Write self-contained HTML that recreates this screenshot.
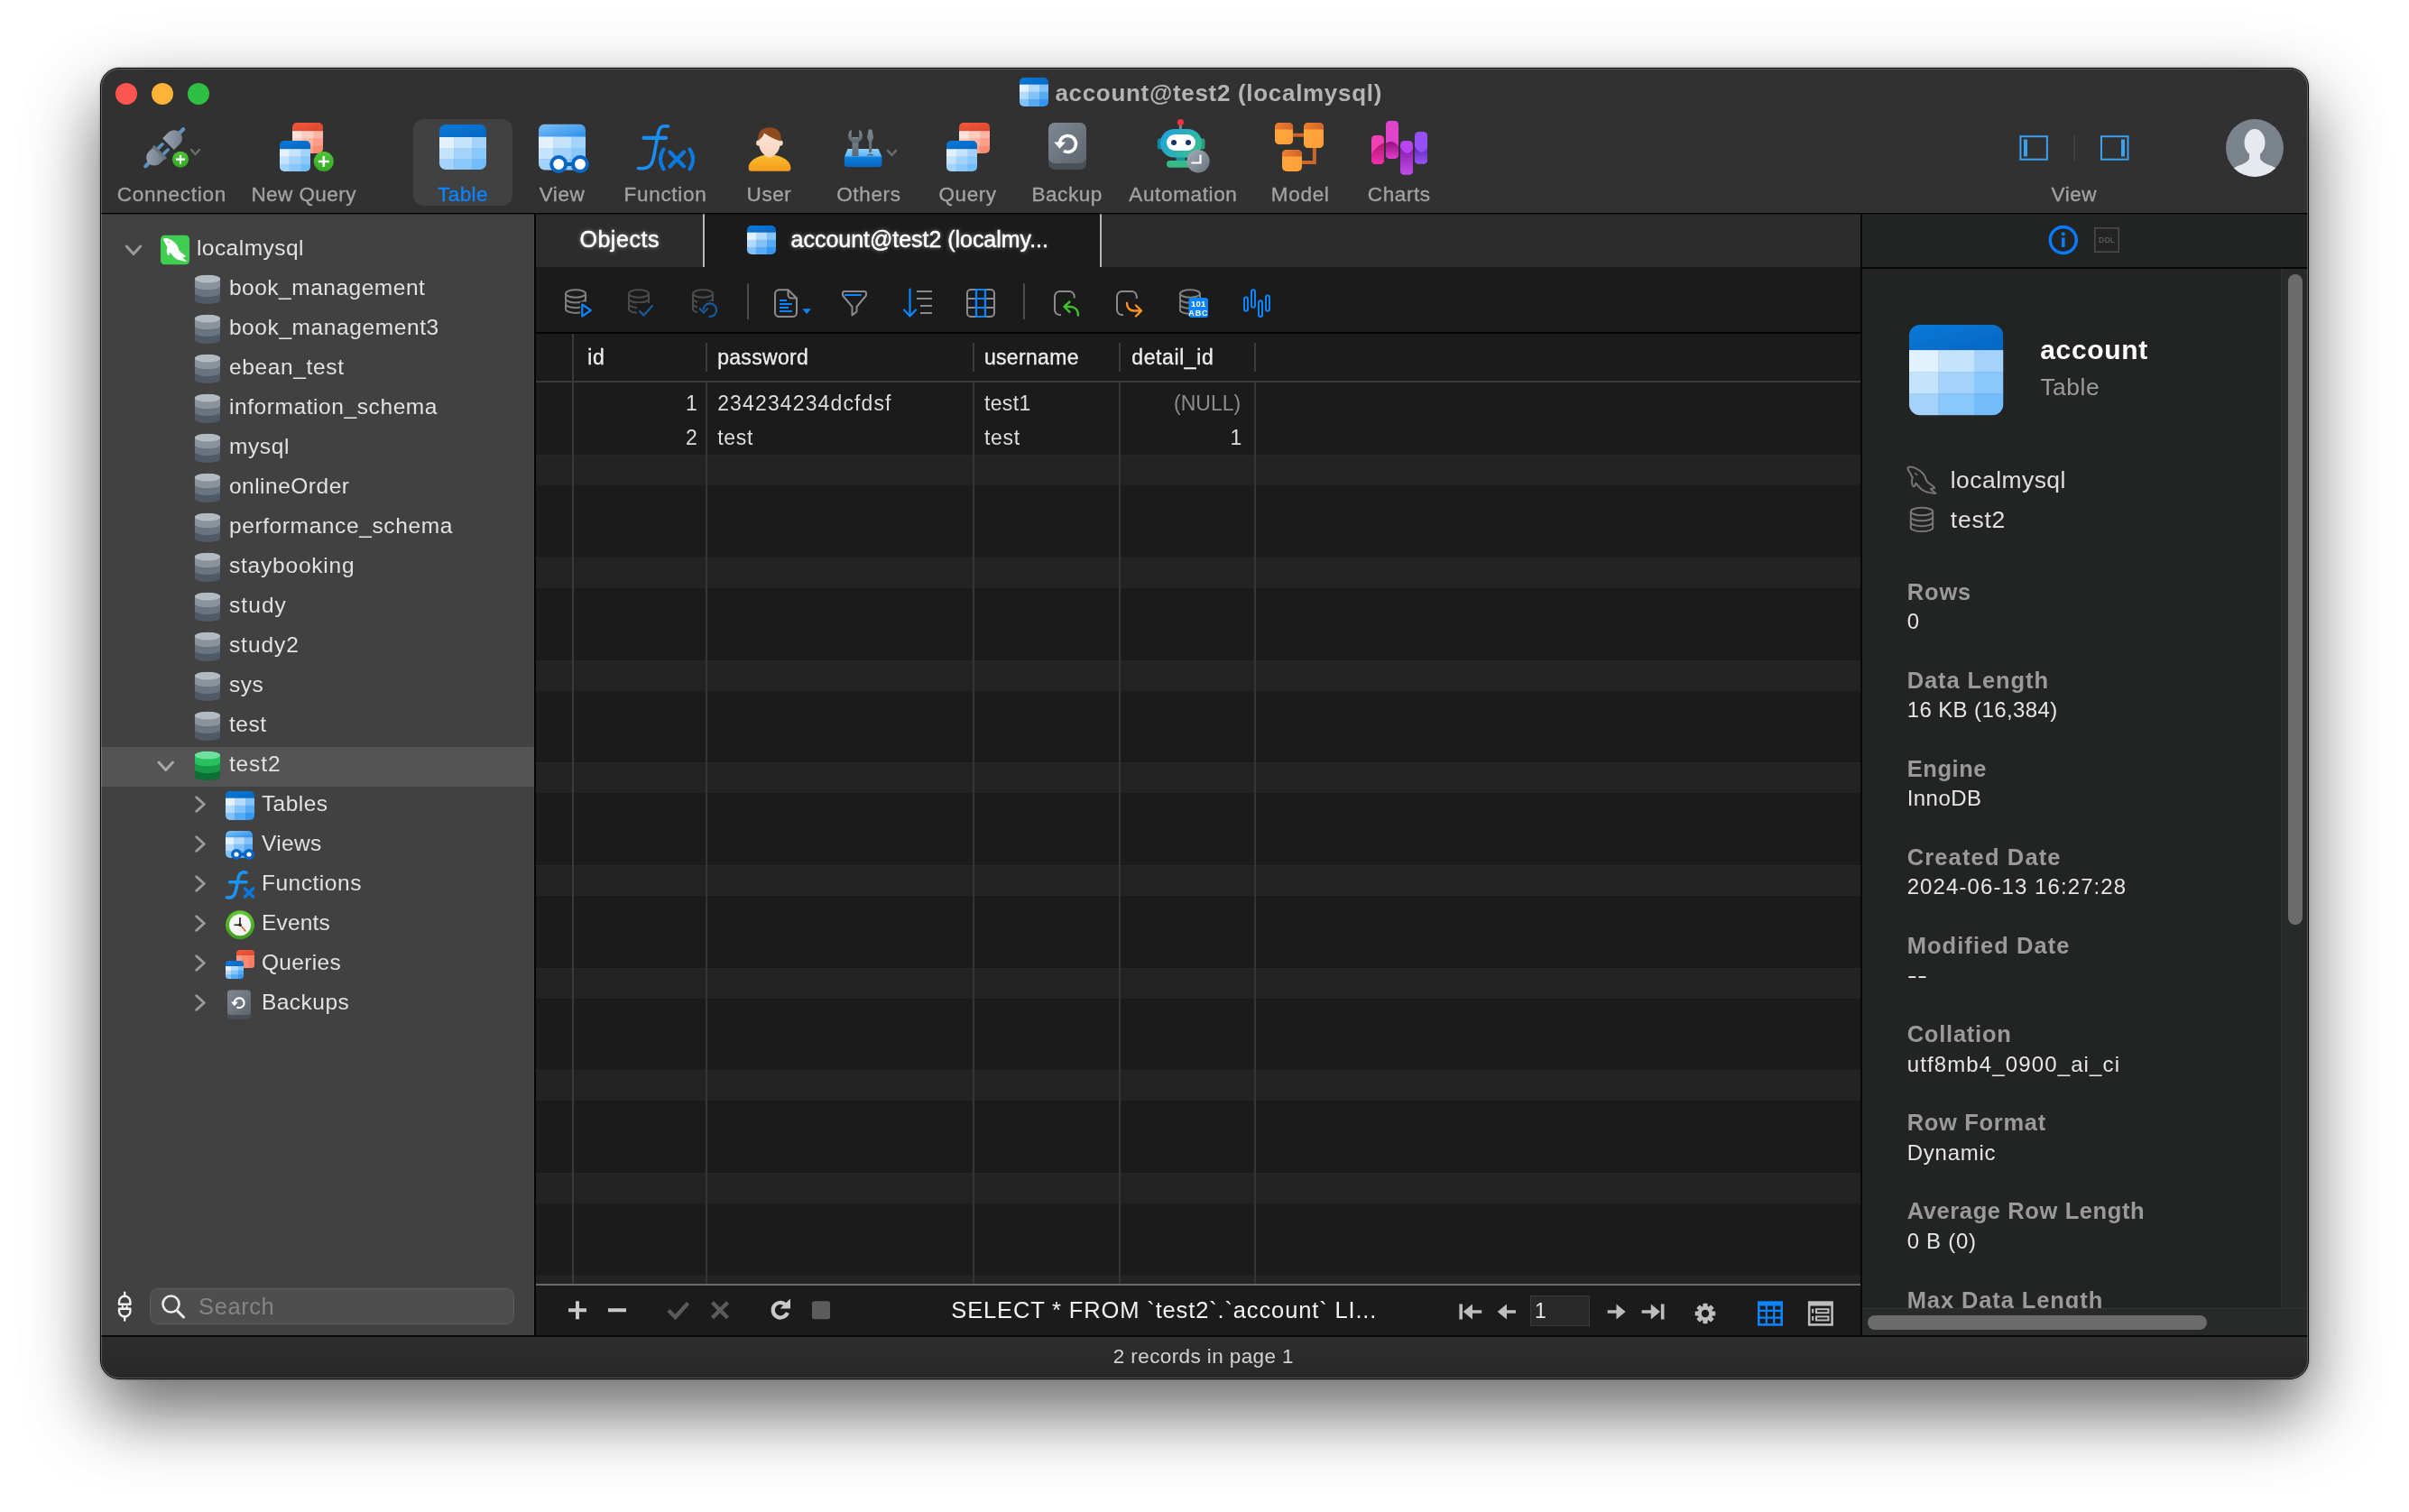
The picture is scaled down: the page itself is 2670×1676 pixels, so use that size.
<!DOCTYPE html>
<html lang="en"><head><meta charset="utf-8"><title>account@test2 (localmysql)</title>
<style>
html,body{margin:0;padding:0;}
body{width:2670px;height:1676px;background:#fff;position:relative;overflow:hidden;font-family:"Liberation Sans", sans-serif;}
#shadow{position:absolute;left:111px;top:75px;width:2448px;height:1454px;border-radius:21px;
  box-shadow:0 37px 74px rgba(0,0,0,.53), 0 30px 110px rgba(0,0,0,.10), 0 0 3px rgba(0,0,0,.3);}
#win{position:absolute;left:111px;top:75px;width:2446px;height:1452px;border:1px solid #000;border-radius:21px;overflow:hidden;background:#323232;}
#pg{position:absolute;left:-112px;top:-76px;width:2670px;height:1676px;will-change:transform;}
#pg div,#pg span{position:absolute;box-sizing:border-box;}
.t{white-space:nowrap;}
#hl{position:absolute;left:0;top:0;right:0;bottom:0;border-radius:20px;box-shadow:inset 0 0 0 1px rgba(255,255,255,.24);pointer-events:none;}
svg{position:absolute;left:0;top:0;}
</style></head><body>
<div id="shadow"></div>
<div id="win"><div id="pg">
<div style="left:112px;top:76px;width:2446px;height:160px;background:#313131;"></div>
<div style="left:112px;top:236px;width:2446px;height:1px;background:#020202;"></div>
<div style="left:112px;top:237px;width:480px;height:1243px;background:#414141;"></div>
<div style="left:591px;top:238px;width:1px;height:1242px;background:#484848;"></div>
<div style="left:592px;top:237px;width:2px;height:1243px;background:#050505;"></div>
<div style="left:594px;top:237px;width:1468px;height:1243px;background:#1b1b1b;"></div>
<div style="left:594px;top:237px;width:1468px;height:59px;background:#2c2c2c;"></div>
<div style="left:781px;top:237px;width:438px;height:59px;background:#1b1b1b;"></div>
<div style="left:779px;top:237px;width:2px;height:59px;background:#b9b9b9;"></div>
<div style="left:1219px;top:237px;width:2px;height:59px;background:#b9b9b9;"></div>
<div style="left:594px;top:368px;width:1468px;height:2px;background:#050505;"></div>
<div style="left:2062px;top:237px;width:2px;height:1243px;background:#080808;"></div>
<div style="left:2064px;top:237px;width:494px;height:1243px;background:#222423;"></div>
<div style="left:2064px;top:296px;width:494px;height:2px;background:#060606;"></div>
<div style="left:112px;top:1480px;width:2446px;height:2px;background:#0a0a0a;"></div>
<div style="left:112px;top:1482px;width:2446px;height:46px;background:linear-gradient(#2e2e2e,#272727);"></div>
<div style="left:112px;top:237px;width:2446px;height:1px;background:rgba(0,0,0,.32);"></div>
<div style="left:112px;top:828px;width:480px;height:44px;background:#545454;"></div>
<div style="left:594px;top:504px;width:1468px;height:34px;background:#232323;border-top:1px solid #272727;"></div>
<div style="left:594px;top:618px;width:1468px;height:34px;background:#232323;border-top:1px solid #272727;"></div>
<div style="left:594px;top:732px;width:1468px;height:34px;background:#232323;border-top:1px solid #272727;"></div>
<div style="left:594px;top:845px;width:1468px;height:34px;background:#232323;border-top:1px solid #272727;"></div>
<div style="left:594px;top:959px;width:1468px;height:34px;background:#232323;border-top:1px solid #272727;"></div>
<div style="left:594px;top:1073px;width:1468px;height:34px;background:#232323;border-top:1px solid #272727;"></div>
<div style="left:594px;top:1186px;width:1468px;height:34px;background:#232323;border-top:1px solid #272727;"></div>
<div style="left:594px;top:1300px;width:1468px;height:34px;background:#232323;border-top:1px solid #272727;"></div>
<div style="left:594px;top:1414px;width:1468px;height:9px;background:#232323;border-top:1px solid #272727;"></div>
<div style="left:594px;top:422px;width:1468px;height:2px;background:#3a3a3a;"></div>
<div style="left:634px;top:370px;width:2px;height:1053px;background:#3a3a3a;"></div>
<div style="left:782px;top:380px;width:2px;height:32px;background:#3c3c3c;"></div>
<div style="left:782px;top:424px;width:2px;height:999px;background:#353535;"></div>
<div style="left:1078px;top:380px;width:2px;height:32px;background:#3c3c3c;"></div>
<div style="left:1078px;top:424px;width:2px;height:999px;background:#353535;"></div>
<div style="left:1240px;top:380px;width:2px;height:32px;background:#3c3c3c;"></div>
<div style="left:1240px;top:424px;width:2px;height:999px;background:#353535;"></div>
<div style="left:1390px;top:380px;width:2px;height:32px;background:#3c3c3c;"></div>
<div style="left:1390px;top:424px;width:2px;height:999px;background:#353535;"></div>
<div style="left:594px;top:1423px;width:1468px;height:2px;background:#6a6a6a;"></div>
<div style="left:458px;top:132px;width:110px;height:96px;background:#414141;border-radius:12px;"></div>
<div style="left:128px;top:92px;width:24px;height:24px;background:#fe5551;border-radius:50%;"></div>
<div style="left:168px;top:92px;width:24px;height:24px;background:#fdb338;border-radius:50%;"></div>
<div style="left:208px;top:92px;width:24px;height:24px;background:#2fc043;border-radius:50%;"></div>
<div style="left:166px;top:1428px;width:404px;height:40px;background:#4e4e4e;border:1px solid #5c5c5c;border-radius:9px;"></div>
<div style="left:1696px;top:1436px;width:66px;height:34px;background:#292929;border:1px solid #3b3b3b;"></div>
<div style="left:2528px;top:298px;width:1px;height:1152px;background:#2e2f2f;"></div>
<div style="left:2529px;top:298px;width:29px;height:1152px;background:#282929;"></div>
<div style="left:2536px;top:304px;width:16px;height:721px;background:#6b6b6b;border-radius:8px;"></div>
<span id="t1" class="t" style="left:1169.4px;top:89.7px;font-size:26px;line-height:26px;color:#b4b4b4;font-weight:700;letter-spacing:0.690px;">account@test2 (localmysql)</span>
<span id="t2" class="t" style="left:129.7px;top:205.0px;font-size:22.5px;line-height:22.5px;color:#a2a2a2;font-weight:400;letter-spacing:0.737px;-webkit-text-stroke:0.35px currentColor;">Connection</span>
<span id="t3" class="t" style="left:278.4px;top:205.0px;font-size:22.5px;line-height:22.5px;color:#a2a2a2;font-weight:400;letter-spacing:0.441px;-webkit-text-stroke:0.35px currentColor;">New Query</span>
<span id="t4" class="t" style="left:485.0px;top:205.0px;font-size:22.5px;line-height:22.5px;color:#0a84ff;font-weight:400;letter-spacing:0.442px;-webkit-text-stroke:0.35px currentColor;">Table</span>
<span id="t5" class="t" style="left:597.7px;top:205.0px;font-size:22.5px;line-height:22.5px;color:#a2a2a2;font-weight:400;letter-spacing:0.549px;-webkit-text-stroke:0.35px currentColor;">View</span>
<span id="t6" class="t" style="left:691.6px;top:205.0px;font-size:22.5px;line-height:22.5px;color:#a2a2a2;font-weight:400;letter-spacing:0.689px;-webkit-text-stroke:0.35px currentColor;">Function</span>
<span id="t7" class="t" style="left:827.6px;top:205.0px;font-size:22.5px;line-height:22.5px;color:#a2a2a2;font-weight:400;letter-spacing:0.549px;-webkit-text-stroke:0.35px currentColor;">User</span>
<span id="t8" class="t" style="left:927.2px;top:205.0px;font-size:22.5px;line-height:22.5px;color:#a2a2a2;font-weight:400;letter-spacing:0.646px;-webkit-text-stroke:0.35px currentColor;">Others</span>
<span id="t9" class="t" style="left:1040.6px;top:205.0px;font-size:22.5px;line-height:22.5px;color:#a2a2a2;font-weight:400;letter-spacing:0.525px;-webkit-text-stroke:0.35px currentColor;">Query</span>
<span id="t10" class="t" style="left:1143.4px;top:205.0px;font-size:22.5px;line-height:22.5px;color:#a2a2a2;font-weight:400;letter-spacing:0.577px;-webkit-text-stroke:0.35px currentColor;">Backup</span>
<span id="t11" class="t" style="left:1251.3px;top:205.0px;font-size:22.5px;line-height:22.5px;color:#a2a2a2;font-weight:400;letter-spacing:0.638px;-webkit-text-stroke:0.35px currentColor;">Automation</span>
<span id="t12" class="t" style="left:1408.7px;top:205.0px;font-size:22.5px;line-height:22.5px;color:#a2a2a2;font-weight:400;letter-spacing:0.725px;-webkit-text-stroke:0.35px currentColor;">Model</span>
<span id="t13" class="t" style="left:1515.8px;top:205.0px;font-size:22.5px;line-height:22.5px;color:#a2a2a2;font-weight:400;letter-spacing:0.605px;-webkit-text-stroke:0.35px currentColor;">Charts</span>
<span id="t14" class="t" style="left:2273.6px;top:205.0px;font-size:22.5px;line-height:22.5px;color:#a2a2a2;font-weight:400;letter-spacing:0.549px;-webkit-text-stroke:0.35px currentColor;">View</span>
<span id="t15" class="t" style="left:642.4px;top:252.8px;font-size:25px;line-height:25px;color:#ffffff;font-weight:400;letter-spacing:0.551px;text-shadow:0 0 5px rgba(255,255,255,.55),0 0 1px rgba(255,255,255,.5);-webkit-text-stroke:0.35px currentColor;">Objects</span>
<span id="t16" class="t" style="left:876.6px;top:252.8px;font-size:25px;line-height:25px;color:#ffffff;font-weight:400;letter-spacing:-0.033px;text-shadow:0 0 5px rgba(255,255,255,.55),0 0 1px rgba(255,255,255,.5);-webkit-text-stroke:0.35px currentColor;">account@test2 (localmy...</span>
<span id="t17" class="t" style="left:217.9px;top:263.3px;font-size:24.5px;line-height:24.5px;color:#e2e2e2;font-weight:400;letter-spacing:0.471px;">localmysql</span>
<span id="t18" class="t" style="left:253.9px;top:307.0px;font-size:24.5px;line-height:24.5px;color:#e2e2e2;font-weight:400;letter-spacing:0.515px;">book_management</span>
<span id="t19" class="t" style="left:253.9px;top:351.0px;font-size:24.5px;line-height:24.5px;color:#e2e2e2;font-weight:400;letter-spacing:0.593px;">book_management3</span>
<span id="t20" class="t" style="left:253.9px;top:395.0px;font-size:24.5px;line-height:24.5px;color:#e2e2e2;font-weight:400;letter-spacing:0.653px;">ebean_test</span>
<span id="t21" class="t" style="left:253.9px;top:439.0px;font-size:24.5px;line-height:24.5px;color:#e2e2e2;font-weight:400;letter-spacing:0.587px;">information_schema</span>
<span id="t22" class="t" style="left:253.9px;top:483.0px;font-size:24.5px;line-height:24.5px;color:#e2e2e2;font-weight:400;letter-spacing:0.620px;">mysql</span>
<span id="t23" class="t" style="left:253.9px;top:527.0px;font-size:24.5px;line-height:24.5px;color:#e2e2e2;font-weight:400;letter-spacing:0.505px;">onlineOrder</span>
<span id="t24" class="t" style="left:253.9px;top:571.0px;font-size:24.5px;line-height:24.5px;color:#e2e2e2;font-weight:400;letter-spacing:0.618px;">performance_schema</span>
<span id="t25" class="t" style="left:253.9px;top:615.0px;font-size:24.5px;line-height:24.5px;color:#e2e2e2;font-weight:400;letter-spacing:0.802px;">staybooking</span>
<span id="t26" class="t" style="left:253.9px;top:659.0px;font-size:24.5px;line-height:24.5px;color:#e2e2e2;font-weight:400;letter-spacing:1.104px;">study</span>
<span id="t27" class="t" style="left:253.9px;top:703.0px;font-size:24.5px;line-height:24.5px;color:#e2e2e2;font-weight:400;letter-spacing:0.981px;">study2</span>
<span id="t28" class="t" style="left:253.9px;top:747.0px;font-size:24.5px;line-height:24.5px;color:#e2e2e2;font-weight:400;letter-spacing:0.569px;">sys</span>
<span id="t29" class="t" style="left:253.9px;top:791.0px;font-size:24.5px;line-height:24.5px;color:#e2e2e2;font-weight:400;letter-spacing:0.569px;">test</span>
<span id="t30" class="t" style="left:253.9px;top:835.0px;font-size:24.5px;line-height:24.5px;color:#e2e2e2;font-weight:400;letter-spacing:0.892px;">test2</span>
<span id="t31" class="t" style="left:289.9px;top:879.0px;font-size:24.5px;line-height:24.5px;color:#e2e2e2;font-weight:400;letter-spacing:0.460px;">Tables</span>
<span id="t32" class="t" style="left:289.9px;top:923.0px;font-size:24.5px;line-height:24.5px;color:#e2e2e2;font-weight:400;letter-spacing:0.392px;">Views</span>
<span id="t33" class="t" style="left:289.9px;top:967.0px;font-size:24.5px;line-height:24.5px;color:#e2e2e2;font-weight:400;letter-spacing:0.539px;">Functions</span>
<span id="t34" class="t" style="left:289.9px;top:1011.0px;font-size:24.5px;line-height:24.5px;color:#e2e2e2;font-weight:400;letter-spacing:0.211px;">Events</span>
<span id="t35" class="t" style="left:289.9px;top:1055.0px;font-size:24.5px;line-height:24.5px;color:#e2e2e2;font-weight:400;letter-spacing:0.326px;">Queries</span>
<span id="t36" class="t" style="left:289.9px;top:1099.0px;font-size:24.5px;line-height:24.5px;color:#e2e2e2;font-weight:400;letter-spacing:0.486px;">Backups</span>
<span id="t37" class="t" style="left:220.1px;top:1436.1px;font-size:25.5px;line-height:25.5px;color:#858585;font-weight:400;letter-spacing:0.559px;">Search</span>
<span id="t38" class="t" style="left:651.3px;top:385.0px;font-size:23px;line-height:23px;color:#ececec;font-weight:400;letter-spacing:0.686px;-webkit-text-stroke:0.35px currentColor;">id</span>
<span id="t39" class="t" style="left:795.2px;top:385.0px;font-size:23px;line-height:23px;color:#ececec;font-weight:400;letter-spacing:0.302px;-webkit-text-stroke:0.35px currentColor;">password</span>
<span id="t40" class="t" style="left:1090.9px;top:385.0px;font-size:23px;line-height:23px;color:#ececec;font-weight:400;letter-spacing:0.334px;-webkit-text-stroke:0.35px currentColor;">username</span>
<span id="t41" class="t" style="left:1254.3px;top:385.0px;font-size:23px;line-height:23px;color:#ececec;font-weight:400;letter-spacing:0.596px;-webkit-text-stroke:0.35px currentColor;">detail_id</span>
<span id="t42" class="t" style="right:1897.1px;top:436.0px;font-size:23px;line-height:23px;color:#dedede;font-weight:400;">1</span>
<span id="t43" class="t" style="right:1897.1px;top:473.9px;font-size:23px;line-height:23px;color:#dedede;font-weight:400;">2</span>
<span id="t44" class="t" style="left:795.2px;top:436.0px;font-size:23px;line-height:23px;color:#dedede;font-weight:400;letter-spacing:1.131px;">234234234dcfdsf</span>
<span id="t45" class="t" style="left:795.2px;top:473.9px;font-size:23px;line-height:23px;color:#dedede;font-weight:400;letter-spacing:0.686px;">test</span>
<span id="t46" class="t" style="left:1090.9px;top:436.0px;font-size:23px;line-height:23px;color:#dedede;font-weight:400;letter-spacing:0.378px;">test1</span>
<span id="t47" class="t" style="left:1090.9px;top:473.9px;font-size:23px;line-height:23px;color:#dedede;font-weight:400;letter-spacing:0.686px;">test</span>
<span id="t48" class="t" style="left:1301.0px;top:436.0px;font-size:23px;line-height:23px;color:#8c8c8c;font-weight:400;letter-spacing:0.004px;">(NULL)</span>
<span id="t49" class="t" style="right:1293.6px;top:473.9px;font-size:23px;line-height:23px;color:#dedede;font-weight:400;">1</span>
<span id="t50" class="t" style="left:1054.3px;top:1439.9px;font-size:25.5px;line-height:25.5px;color:#f2f2f2;font-weight:400;letter-spacing:0.857px;">SELECT * FROM `test2`.`account` LI...</span>
<span id="t51" class="t" style="left:1701.0px;top:1442.0px;font-size:23px;line-height:23px;color:#e6e6e6;font-weight:400;">1</span>
<span id="t52" class="t" style="left:1233.8px;top:1493.0px;font-size:22.5px;line-height:22.5px;color:#d2d2d2;font-weight:400;letter-spacing:0.394px;">2 records in page 1</span>
<span id="t53" class="t" style="left:2261.2px;top:372.6px;font-size:30px;line-height:30px;color:#ffffff;font-weight:700;letter-spacing:0.660px;">account</span>
<span id="t54" class="t" style="left:2261.4px;top:415.6px;font-size:26.5px;line-height:26.5px;color:#9b9b9b;font-weight:400;letter-spacing:0.478px;">Table</span>
<span id="t55" class="t" style="left:2161.8px;top:518.9px;font-size:26.5px;line-height:26.5px;color:#e0e0e0;font-weight:400;letter-spacing:0.435px;">localmysql</span>
<span id="t56" class="t" style="left:2161.8px;top:563.2px;font-size:26.5px;line-height:26.5px;color:#e0e0e0;font-weight:400;letter-spacing:0.759px;">test2</span>
<span id="t57" class="t" style="left:2113.7px;top:644.0px;font-size:25.5px;line-height:25.5px;color:#9a9a9a;font-weight:700;letter-spacing:0.853px;">Rows</span>
<span id="t58" class="t" style="left:2113.7px;top:677.2px;font-size:24px;line-height:24px;color:#e6e6e6;font-weight:400;letter-spacing:0.870px;">0</span>
<span id="t59" class="t" style="left:2113.7px;top:742.1px;font-size:25.5px;line-height:25.5px;color:#9a9a9a;font-weight:700;letter-spacing:0.893px;">Data Length</span>
<span id="t60" class="t" style="left:2113.7px;top:775.2px;font-size:24px;line-height:24px;color:#e6e6e6;font-weight:400;letter-spacing:0.386px;">16 KB (16,384)</span>
<span id="t61" class="t" style="left:2113.7px;top:840.1px;font-size:25.5px;line-height:25.5px;color:#9a9a9a;font-weight:700;letter-spacing:0.558px;">Engine</span>
<span id="t62" class="t" style="left:2113.7px;top:873.3px;font-size:24px;line-height:24px;color:#e6e6e6;font-weight:400;letter-spacing:0.446px;">InnoDB</span>
<span id="t63" class="t" style="left:2113.7px;top:938.2px;font-size:25.5px;line-height:25.5px;color:#9a9a9a;font-weight:700;letter-spacing:1.138px;">Created Date</span>
<span id="t64" class="t" style="left:2113.7px;top:971.4px;font-size:24px;line-height:24px;color:#e6e6e6;font-weight:400;letter-spacing:1.088px;">2024-06-13 16:27:28</span>
<span id="t65" class="t" style="left:2113.7px;top:1036.3px;font-size:25.5px;line-height:25.5px;color:#9a9a9a;font-weight:700;letter-spacing:1.045px;">Modified Date</span>
<span id="t66" class="t" style="left:2113.7px;top:1069.4px;font-size:24px;line-height:24px;color:#e6e6e6;font-weight:400;transform:scaleX(1.32);transform-origin:0 0;letter-spacing:0.6px;">--</span>
<span id="t67" class="t" style="left:2113.7px;top:1134.3px;font-size:25.5px;line-height:25.5px;color:#9a9a9a;font-weight:700;letter-spacing:0.765px;">Collation</span>
<span id="t68" class="t" style="left:2113.7px;top:1167.5px;font-size:24px;line-height:24px;color:#e6e6e6;font-weight:400;letter-spacing:1.126px;">utf8mb4_0900_ai_ci</span>
<span id="t69" class="t" style="left:2113.7px;top:1232.4px;font-size:25.5px;line-height:25.5px;color:#9a9a9a;font-weight:700;letter-spacing:0.683px;">Row Format</span>
<span id="t70" class="t" style="left:2113.7px;top:1265.5px;font-size:24px;line-height:24px;color:#e6e6e6;font-weight:400;letter-spacing:0.754px;">Dynamic</span>
<span id="t71" class="t" style="left:2113.7px;top:1330.4px;font-size:25.5px;line-height:25.5px;color:#9a9a9a;font-weight:700;letter-spacing:0.605px;">Average Row Length</span>
<span id="t72" class="t" style="left:2113.7px;top:1363.6px;font-size:24px;line-height:24px;color:#e6e6e6;font-weight:400;letter-spacing:0.701px;">0 B (0)</span>
<span id="t73" class="t" style="left:2113.7px;top:1428.5px;font-size:25.5px;line-height:25.5px;color:#9a9a9a;font-weight:700;letter-spacing:0.896px;">Max Data Length</span>
<div style="left:2064px;top:1450px;width:494px;height:1px;background:#323333;"></div>
<div style="left:2064px;top:1451px;width:494px;height:29px;background:#282929;"></div>
<div style="left:2070px;top:1458px;width:376px;height:16px;background:#6b6b6b;border-radius:8px;"></div>
<svg width="2670" height="1676" viewBox="0 0 2670 1676" font-family='"Liberation Sans", sans-serif'>
<defs>
<clipPath id="cp1"><rect x="1130" y="86" width="32" height="32" rx="5"/></clipPath>
<linearGradient id="lg2" x1="0" y1="0" x2="1" y2="1"><stop offset="0" stop-color="#0a7ad8"/><stop offset="1" stop-color="#0566c2"/></linearGradient>
<clipPath id="cp3"><rect x="828" y="250" width="32" height="32" rx="5"/></clipPath>
<linearGradient id="lg4" x1="0" y1="0" x2="1" y2="1"><stop offset="0" stop-color="#0a7ad8"/><stop offset="1" stop-color="#0566c2"/></linearGradient>
<linearGradient id="lg5" x1="0" y1="0" x2="1" y2="1"><stop offset="0" stop-color="#9ba6b1"/><stop offset="1" stop-color="#6e7a86"/></linearGradient>
<linearGradient id="lg6" x1="0" y1="0" x2="0" y2="1"><stop offset="0" stop-color="#4cc535"/><stop offset="1" stop-color="#35a924"/></linearGradient>
<clipPath id="cp7"><rect x="324" y="136" width="34" height="34" rx="5"/></clipPath>
<linearGradient id="lg8" x1="0" y1="0" x2="1" y2="1"><stop offset="0" stop-color="#f4583a"/><stop offset="1" stop-color="#d8452c"/></linearGradient>
<clipPath id="cp9"><rect x="310" y="156" width="34" height="34" rx="5"/></clipPath>
<linearGradient id="lg10" x1="0" y1="0" x2="1" y2="1"><stop offset="0" stop-color="#0a7ad8"/><stop offset="1" stop-color="#0566c2"/></linearGradient>
<linearGradient id="lg11" x1="0" y1="0" x2="0" y2="1"><stop offset="0" stop-color="#4cc535"/><stop offset="1" stop-color="#35a924"/></linearGradient>
<clipPath id="cp12"><rect x="487" y="138" width="52" height="50" rx="7"/></clipPath>
<linearGradient id="lg13" x1="0" y1="0" x2="1" y2="1"><stop offset="0" stop-color="#0a7ad8"/><stop offset="1" stop-color="#0566c2"/></linearGradient>
<clipPath id="cp14"><rect x="597" y="137.5" width="52" height="51" rx="7"/></clipPath>
<linearGradient id="lg15" x1="0" y1="0" x2="1" y2="1"><stop offset="0" stop-color="#7fc0f7"/><stop offset="1" stop-color="#2a8eea"/></linearGradient>
<linearGradient id="lg16" x1="0" y1="0" x2="0" y2="1"><stop offset="0" stop-color="#fbbf2d"/><stop offset="1" stop-color="#f59a1f"/></linearGradient>
<linearGradient id="lg17" x1="0" y1="0" x2="0" y2="1"><stop offset="0" stop-color="#fde8da"/><stop offset="1" stop-color="#fbd3bd"/></linearGradient>
<clipPath id="cp18"><ellipse cx="852.7" cy="158" rx="12.6" ry="15"/></clipPath>
<linearGradient id="lg19" x1="0" y1="0" x2="0" y2="1"><stop offset="0" stop-color="#7d8790"/><stop offset="1" stop-color="#5d6770"/></linearGradient>
<linearGradient id="lg20" x1="0" y1="0" x2="0" y2="1"><stop offset="0" stop-color="#8fd0fb"/><stop offset="1" stop-color="#5ab4f6"/></linearGradient>
<linearGradient id="lg21" x1="0" y1="0" x2="0" y2="1"><stop offset="0" stop-color="#0f80de"/><stop offset="1" stop-color="#0568c6"/></linearGradient>
<clipPath id="cp22"><rect x="1063" y="136" width="34" height="34" rx="5"/></clipPath>
<linearGradient id="lg23" x1="0" y1="0" x2="1" y2="1"><stop offset="0" stop-color="#f4583a"/><stop offset="1" stop-color="#d8452c"/></linearGradient>
<clipPath id="cp24"><rect x="1049" y="156" width="34" height="34" rx="5"/></clipPath>
<linearGradient id="lg25" x1="0" y1="0" x2="1" y2="1"><stop offset="0" stop-color="#0a7ad8"/><stop offset="1" stop-color="#0566c2"/></linearGradient>
<linearGradient id="lg26" x1="0" y1="0" x2="1" y2="1"><stop offset="0" stop-color="#808993"/><stop offset="1" stop-color="#5d656e"/></linearGradient>
<linearGradient id="lg27" x1="0" y1="0.2" x2="1" y2="0.8"><stop offset="0" stop-color="#1fa3de"/><stop offset="0.5" stop-color="#2ab0b8"/><stop offset="1" stop-color="#3dc088"/></linearGradient>
<linearGradient id="lg28" x1="0" y1="0" x2="1" y2="1"><stop offset="0" stop-color="#a2adb8"/><stop offset="1" stop-color="#68737f"/></linearGradient>
<clipPath id="cp29"><rect x="1413" y="136" width="20.2" height="24.2" rx="5"/></clipPath>
<linearGradient id="lg30" x1="0" y1="0" x2="1" y2="1"><stop offset="0" stop-color="#ffab3c"/><stop offset="1" stop-color="#ff9c38"/></linearGradient>
<linearGradient id="lg31" x1="0" y1="0" x2="1" y2="0"><stop offset="0" stop-color="#f07f2c"/><stop offset="1" stop-color="#d0652a"/></linearGradient>
<clipPath id="cp32"><rect x="1445" y="136" width="22" height="28.2" rx="5"/></clipPath>
<linearGradient id="lg33" x1="0" y1="0" x2="1" y2="1"><stop offset="0" stop-color="#ffab3c"/><stop offset="1" stop-color="#ff9c38"/></linearGradient>
<linearGradient id="lg34" x1="0" y1="0" x2="1" y2="0"><stop offset="0" stop-color="#f07f2c"/><stop offset="1" stop-color="#d0652a"/></linearGradient>
<clipPath id="cp35"><rect x="1421" y="166" width="22" height="24" rx="5"/></clipPath>
<linearGradient id="lg36" x1="0" y1="0" x2="1" y2="1"><stop offset="0" stop-color="#ffab3c"/><stop offset="1" stop-color="#ff9c38"/></linearGradient>
<linearGradient id="lg37" x1="0" y1="0" x2="1" y2="0"><stop offset="0" stop-color="#f07f2c"/><stop offset="1" stop-color="#d0652a"/></linearGradient>
<clipPath id="cp38"><rect x="1520" y="150" width="14" height="32" rx="4.500"/></clipPath>
<linearGradient id="lg39" x1="0" y1="0" x2="0" y2="1"><stop offset="0" stop-color="#b01672"/><stop offset="1" stop-color="#f030b0"/></linearGradient>
<clipPath id="cp40"><rect x="1536" y="133.7" width="14" height="42.2" rx="4.500"/></clipPath>
<linearGradient id="lg41" x1="0" y1="0" x2="0" y2="1"><stop offset="0" stop-color="#96107c"/><stop offset="1" stop-color="#e33ccc"/></linearGradient>
<clipPath id="cp42"><rect x="1552" y="156" width="14" height="37.7" rx="4.500"/></clipPath>
<linearGradient id="lg43" x1="0" y1="0" x2="0" y2="1"><stop offset="0" stop-color="#8a1cb0"/><stop offset="1" stop-color="#c24ce8"/></linearGradient>
<clipPath id="cp44"><rect x="1568" y="146" width="14" height="35.7" rx="4.500"/></clipPath>
<linearGradient id="lg45" x1="0" y1="0" x2="0" y2="1"><stop offset="0" stop-color="#5a26b4"/><stop offset="1" stop-color="#9a54f8"/></linearGradient>
<clipPath id="cp46"><circle cx="2499" cy="164" r="32"/></clipPath>
<clipPath id="cp47"><path d="M215.8 309.1A14.2 4.3 0 0 1 244.20000000000002 309.1V332.7A14.2 4.3 0 0 1 215.8 332.7Z"/></clipPath>
<clipPath id="cp48"><path d="M215.8 353.1A14.2 4.3 0 0 1 244.20000000000002 353.1V376.7A14.2 4.3 0 0 1 215.8 376.7Z"/></clipPath>
<clipPath id="cp49"><path d="M215.8 397.1A14.2 4.3 0 0 1 244.20000000000002 397.1V420.7A14.2 4.3 0 0 1 215.8 420.7Z"/></clipPath>
<clipPath id="cp50"><path d="M215.8 441.1A14.2 4.3 0 0 1 244.20000000000002 441.1V464.7A14.2 4.3 0 0 1 215.8 464.7Z"/></clipPath>
<clipPath id="cp51"><path d="M215.8 485.1A14.2 4.3 0 0 1 244.20000000000002 485.1V508.7A14.2 4.3 0 0 1 215.8 508.7Z"/></clipPath>
<clipPath id="cp52"><path d="M215.8 529.0999999999999A14.2 4.3 0 0 1 244.20000000000002 529.0999999999999V552.7A14.2 4.3 0 0 1 215.8 552.7Z"/></clipPath>
<clipPath id="cp53"><path d="M215.8 573.0999999999999A14.2 4.3 0 0 1 244.20000000000002 573.0999999999999V596.7A14.2 4.3 0 0 1 215.8 596.7Z"/></clipPath>
<clipPath id="cp54"><path d="M215.8 617.0999999999999A14.2 4.3 0 0 1 244.20000000000002 617.0999999999999V640.7A14.2 4.3 0 0 1 215.8 640.7Z"/></clipPath>
<clipPath id="cp55"><path d="M215.8 661.0999999999999A14.2 4.3 0 0 1 244.20000000000002 661.0999999999999V684.7A14.2 4.3 0 0 1 215.8 684.7Z"/></clipPath>
<clipPath id="cp56"><path d="M215.8 705.0999999999999A14.2 4.3 0 0 1 244.20000000000002 705.0999999999999V728.7A14.2 4.3 0 0 1 215.8 728.7Z"/></clipPath>
<clipPath id="cp57"><path d="M215.8 749.0999999999999A14.2 4.3 0 0 1 244.20000000000002 749.0999999999999V772.7A14.2 4.3 0 0 1 215.8 772.7Z"/></clipPath>
<clipPath id="cp58"><path d="M215.8 793.0999999999999A14.2 4.3 0 0 1 244.20000000000002 793.0999999999999V816.7A14.2 4.3 0 0 1 215.8 816.7Z"/></clipPath>
<clipPath id="cp59"><path d="M215.8 837.0999999999999A14.2 4.3 0 0 1 244.20000000000002 837.0999999999999V860.7A14.2 4.3 0 0 1 215.8 860.7Z"/></clipPath>
<clipPath id="cp60"><rect x="250" y="877" width="32" height="32" rx="5"/></clipPath>
<linearGradient id="lg61" x1="0" y1="0" x2="1" y2="1"><stop offset="0" stop-color="#0a7ad8"/><stop offset="1" stop-color="#0566c2"/></linearGradient>
<clipPath id="cp62"><rect x="250" y="921" width="30" height="30" rx="5"/></clipPath>
<linearGradient id="lg63" x1="0" y1="0" x2="1" y2="1"><stop offset="0" stop-color="#7fc0f7"/><stop offset="1" stop-color="#2a8eea"/></linearGradient>
<linearGradient id="lg64" x1="0" y1="0" x2="0" y2="1"><stop offset="0" stop-color="#62c935"/><stop offset="1" stop-color="#3f9a1e"/></linearGradient>
<clipPath id="cp65"><rect x="262" y="1053" width="20" height="20" rx="3.5"/></clipPath>
<linearGradient id="lg66" x1="0" y1="0" x2="1" y2="1"><stop offset="0" stop-color="#f4583a"/><stop offset="1" stop-color="#e04a2e"/></linearGradient>
<clipPath id="cp67"><rect x="250" y="1065" width="20" height="20" rx="3.5"/></clipPath>
<linearGradient id="lg68" x1="0" y1="0" x2="1" y2="1"><stop offset="0" stop-color="#0a7ad8"/><stop offset="1" stop-color="#0566c2"/></linearGradient>
<clipPath id="cp69"><rect x="2116" y="360" width="104.3" height="100.3" rx="12"/></clipPath>
<linearGradient id="lg70" x1="0" y1="0" x2="1" y2="1"><stop offset="0" stop-color="#0a7ad8"/><stop offset="1" stop-color="#0566c2"/></linearGradient>
</defs>
<g clip-path="url(#cp1)"><rect x="1130" y="86" width="32" height="8.18" fill="url(#lg2)"/><rect x="1130.00" y="93.68" width="10.42" height="8.61" fill="#e2f1fe"/><rect x="1130.00" y="101.79" width="10.42" height="8.61" fill="#b5dafb"/><rect x="1130.00" y="109.89" width="10.42" height="8.61" fill="#83c2f8"/><rect x="1139.92" y="93.68" width="12.66" height="8.61" fill="#b5dafb"/><rect x="1139.92" y="101.79" width="12.66" height="8.61" fill="#83c2f8"/><rect x="1139.92" y="109.89" width="12.66" height="8.61" fill="#57aaf4"/><rect x="1152.08" y="93.68" width="10.42" height="8.61" fill="#83c2f8"/><rect x="1152.08" y="101.79" width="10.42" height="8.61" fill="#57aaf4"/><rect x="1152.08" y="109.89" width="10.42" height="8.61" fill="#3597f0"/></g>
<g clip-path="url(#cp3)"><rect x="828" y="250" width="32" height="8.18" fill="url(#lg4)"/><rect x="828.00" y="257.68" width="10.42" height="8.61" fill="#e2f1fe"/><rect x="828.00" y="265.79" width="10.42" height="8.61" fill="#b5dafb"/><rect x="828.00" y="273.89" width="10.42" height="8.61" fill="#83c2f8"/><rect x="837.92" y="257.68" width="12.66" height="8.61" fill="#b5dafb"/><rect x="837.92" y="265.79" width="12.66" height="8.61" fill="#83c2f8"/><rect x="837.92" y="273.89" width="12.66" height="8.61" fill="#57aaf4"/><rect x="850.08" y="257.68" width="10.42" height="8.61" fill="#83c2f8"/><rect x="850.08" y="265.79" width="10.42" height="8.61" fill="#57aaf4"/><rect x="850.08" y="273.89" width="10.42" height="8.61" fill="#3597f0"/></g>
<g transform="translate(182.4 163.6) rotate(-44.4) scale(0.95)">
<path d="M-31 0H-24M24 0H30.500" stroke="#5a93c0" stroke-width="4.5" stroke-linecap="round"/>
<path d="M-7 -4.600H1M-7 4.600H1" stroke="#5a93c0" stroke-width="3.800" stroke-linecap="round"/>
<path d="M-9 -9.500H-16.500A9.500 9.500 0 0 0 -26 0A9.500 9.500 0 0 0 -16.500 9.500H-9Z" fill="url(#lg5)"/>
<rect x="-10" y="-10.500" width="3.600" height="21" fill="#66727d"/>
<path d="M6 -9.500H15.500A9.500 9.500 0 0 1 25 0A9.500 9.500 0 0 1 15.500 9.500H6Z" fill="url(#lg5)"/>
</g>
<circle cx="200" cy="176.7" r="9" fill="url(#lg6)"/><path d="M195 176.7H205M200 171.7V181.7" stroke="#fff" stroke-width="2.2" stroke-linecap="butt" fill="none"/>
<path d="M212.0 166.0L216.5 171.0L221.0 166.0" stroke="#6b6b6b" stroke-width="2.6" fill="none" stroke-linecap="round" stroke-linejoin="round"/>
<g clip-path="url(#cp7)"><rect x="324" y="136" width="34" height="9.68" fill="url(#lg8)"/><rect x="324.00" y="145.18" width="11.04" height="8.77" fill="#fde3de"/><rect x="324.00" y="153.45" width="11.04" height="8.77" fill="#fecdc2"/><rect x="324.00" y="161.73" width="11.04" height="8.77" fill="#feb4a3"/><rect x="334.54" y="145.18" width="13.42" height="8.77" fill="#fecdc2"/><rect x="334.54" y="153.45" width="13.42" height="8.77" fill="#feb4a3"/><rect x="334.54" y="161.73" width="13.42" height="8.77" fill="#fe9d88"/><rect x="347.46" y="145.18" width="11.04" height="8.77" fill="#feb4a3"/><rect x="347.46" y="153.45" width="11.04" height="8.77" fill="#fe9d88"/><rect x="347.46" y="161.73" width="11.04" height="8.77" fill="#fd8a72"/></g>
<g clip-path="url(#cp9)"><rect x="310" y="156" width="34" height="9.68" fill="url(#lg10)"/><rect x="310.00" y="165.18" width="11.04" height="8.77" fill="#e2f1fe"/><rect x="310.00" y="173.45" width="11.04" height="8.77" fill="#c6e3fc"/><rect x="310.00" y="181.73" width="11.04" height="8.77" fill="#a3d3fb"/><rect x="320.54" y="165.18" width="13.42" height="8.77" fill="#c6e3fc"/><rect x="320.54" y="173.45" width="13.42" height="8.77" fill="#a3d3fb"/><rect x="320.54" y="181.73" width="13.42" height="8.77" fill="#8bc8fa"/><rect x="333.46" y="165.18" width="11.04" height="8.77" fill="#a3d3fb"/><rect x="333.46" y="173.45" width="11.04" height="8.77" fill="#8bc8fa"/><rect x="333.46" y="181.73" width="11.04" height="8.77" fill="#72bcf9"/></g>
<circle cx="358.8" cy="179" r="11" fill="url(#lg11)"/><path d="M352.8 179H364.8M358.8 173V185" stroke="#fff" stroke-width="2.6" stroke-linecap="butt" fill="none"/>
<g clip-path="url(#cp12)"><rect x="487" y="138" width="52" height="14.50" fill="url(#lg13)"/><rect x="487.00" y="152.00" width="16.62" height="12.50" fill="#e2f1fe"/><rect x="487.00" y="164.00" width="16.62" height="12.50" fill="#c6e3fc"/><rect x="487.00" y="176.00" width="16.62" height="12.50" fill="#a3d3fb"/><rect x="503.12" y="152.00" width="20.26" height="12.50" fill="#c6e3fc"/><rect x="503.12" y="164.00" width="20.26" height="12.50" fill="#a3d3fb"/><rect x="503.12" y="176.00" width="20.26" height="12.50" fill="#8bc8fa"/><rect x="522.88" y="152.00" width="16.62" height="12.50" fill="#a3d3fb"/><rect x="522.88" y="164.00" width="16.62" height="12.50" fill="#8bc8fa"/><rect x="522.88" y="176.00" width="16.62" height="12.50" fill="#72bcf9"/></g>
<g clip-path="url(#cp14)"><rect x="597" y="137.5" width="52" height="14.53" fill="url(#lg15)"/><rect x="597.00" y="151.53" width="16.62" height="12.83" fill="#e2f1fe"/><rect x="597.00" y="163.85" width="16.62" height="12.83" fill="#c6e3fc"/><rect x="597.00" y="176.18" width="16.62" height="12.83" fill="#a3d3fb"/><rect x="613.12" y="151.53" width="20.26" height="12.83" fill="#c6e3fc"/><rect x="613.12" y="163.85" width="20.26" height="12.83" fill="#a3d3fb"/><rect x="613.12" y="176.18" width="20.26" height="12.83" fill="#8bc8fa"/><rect x="632.88" y="151.53" width="16.62" height="12.83" fill="#a3d3fb"/><rect x="632.88" y="163.85" width="16.62" height="12.83" fill="#8bc8fa"/><rect x="632.88" y="176.18" width="16.62" height="12.83" fill="#72bcf9"/></g>
<path d="M619 182H643" stroke="#0660b8" stroke-width="4"/><circle cx="619.2" cy="182" r="8" fill="#fff" stroke="#0a66c2" stroke-width="4"/><circle cx="643" cy="182" r="8" fill="#fff" stroke="#0a66c2" stroke-width="4"/>
<g fill="none" stroke="#1b8ef2" stroke-linecap="round" stroke-linejoin="round"><path d="M707.500 186.5C722 188.500 724 180 726 166L729 150C731 138 736 139.500 740.500 140" stroke-width="3.6"/><path d="M713.500 152.800H738" stroke-width="4.200"/><path d="M735.500 165.500Q728.500 176.500 735.500 187.500M764.500 165.500Q771.500 176.500 764.500 187.500" stroke="#0a7ae0" stroke-width="4"/><path d="M742.500 168.500L758 184.500M758 168.500L742.500 184.500" stroke="#0a7ae0" stroke-width="4.300"/></g>
<path d="M829.700 189.800V186C829.700 177 842 171.500 853 171.500C864 171.500 876.400 177 876.400 186V186.800A3 3 0 0 1 873.400 189.800H832.700A3 3 0 0 1 829.700 186.800Z" fill="url(#lg16)"/><path d="M847.500 168H858.500V172Q853 177.500 847.500 172Z" fill="#f9d2bb"/><circle cx="841.300" cy="158.500" r="3.200" fill="#fbd9c6"/><circle cx="864.500" cy="158.500" r="3.200" fill="#fbd9c6"/><ellipse cx="852.900" cy="158.500" rx="11.800" ry="14.800" fill="url(#lg17)"/><path d="M840.300 155.500C839.300 146 845 141.200 853 141.200C861 141.200 866.700 146 865.700 156.500Q857 154.500 847 147.500Q845.500 152.500 840.300 155.500Z" fill="#8f4a1e"/>
<path d="M939.500 165H973.500L977.400 174H935.900Z" fill="url(#lg20)"/><rect x="944.500" y="152" width="7" height="21" fill="url(#lg19)"/><path d="M943.800 143.600A8 8 0 1 0 952.200 143.600V150.400A3.200 3.200 0 0 1 949 153.600H947A3.200 3.200 0 0 1 943.800 150.400Z" fill="url(#lg19)"/><path d="M962.800 143.500H966.400L968.200 152.500L966.200 157V169H963V157L961 152.500Z" fill="url(#lg19)"/><path d="M960 172.500Q964.600 168.500 969.200 172.500Z" fill="#5d6770"/><path d="M935.900 173.500H977.400V182A3 3 0 0 1 974.400 185H938.900A3 3 0 0 1 935.900 182Z" fill="url(#lg21)"/>
<path d="M984.0 167.0L988.5 172.0L993.0 167.0" stroke="#6b6b6b" stroke-width="2.6" fill="none" stroke-linecap="round" stroke-linejoin="round"/>
<g clip-path="url(#cp22)"><rect x="1063" y="136" width="34" height="9.68" fill="url(#lg23)"/><rect x="1063.00" y="145.18" width="11.04" height="8.77" fill="#fde3de"/><rect x="1063.00" y="153.45" width="11.04" height="8.77" fill="#fecdc2"/><rect x="1063.00" y="161.73" width="11.04" height="8.77" fill="#feb4a3"/><rect x="1073.54" y="145.18" width="13.42" height="8.77" fill="#fecdc2"/><rect x="1073.54" y="153.45" width="13.42" height="8.77" fill="#feb4a3"/><rect x="1073.54" y="161.73" width="13.42" height="8.77" fill="#fe9d88"/><rect x="1086.46" y="145.18" width="11.04" height="8.77" fill="#feb4a3"/><rect x="1086.46" y="153.45" width="11.04" height="8.77" fill="#fe9d88"/><rect x="1086.46" y="161.73" width="11.04" height="8.77" fill="#fd8a72"/></g>
<g clip-path="url(#cp24)"><rect x="1049" y="156" width="34" height="9.68" fill="url(#lg25)"/><rect x="1049.00" y="165.18" width="11.04" height="8.77" fill="#e2f1fe"/><rect x="1049.00" y="173.45" width="11.04" height="8.77" fill="#c6e3fc"/><rect x="1049.00" y="181.73" width="11.04" height="8.77" fill="#a3d3fb"/><rect x="1059.54" y="165.18" width="13.42" height="8.77" fill="#c6e3fc"/><rect x="1059.54" y="173.45" width="13.42" height="8.77" fill="#a3d3fb"/><rect x="1059.54" y="181.73" width="13.42" height="8.77" fill="#8bc8fa"/><rect x="1072.46" y="165.18" width="11.04" height="8.77" fill="#a3d3fb"/><rect x="1072.46" y="173.45" width="11.04" height="8.77" fill="#8bc8fa"/><rect x="1072.46" y="181.73" width="11.04" height="8.77" fill="#72bcf9"/></g>
<rect x="1162" y="136" width="42" height="52" rx="7" fill="#4a5058"/><rect x="1162" y="136" width="42" height="45" rx="7" fill="url(#lg26)"/><path d="M1174.500 158.500A9 9 0 1 1 1179 167.300" fill="none" stroke="#fff" stroke-width="3.6"/><path d="M1168.300 157.500H1181L1174.600 164.800Z" fill="#fff"/>
<rect x="1306.900" y="137" width="3" height="8" fill="#7d8790"/><circle cx="1308.400" cy="135.500" r="3.6" fill="#ee3344"/><rect x="1282.800" y="153.500" width="6" height="12" rx="2.500" fill="#15869c"/><rect x="1329.500" y="153.500" width="6" height="12" rx="2.500" fill="#2a9a80"/><rect x="1303.500" y="172" width="10" height="8" fill="#1795a5"/><rect x="1293" y="178" width="31" height="7.700" rx="3.800" fill="#36bb86"/><rect x="1286" y="143" width="46" height="31.500" rx="15.500" fill="url(#lg27)"/><rect x="1293" y="149" width="32" height="18" rx="9" fill="#fff"/><circle cx="1301" cy="158" r="3" fill="#14306e"/><circle cx="1317" cy="158" r="3" fill="#14306e"/><circle cx="1328" cy="178.800" r="12.700" fill="url(#lg28)"/><path d="M1330.500 171.500V180.500H1320.500" fill="none" stroke="#fff" stroke-width="2.200"/>
<path d="M1432 149.700H1446M1456.900 163V180H1442" fill="none" stroke="#cd662b" stroke-width="4"/>
<g clip-path="url(#cp29)"><rect x="1413" y="136" width="20.2" height="24.2" fill="url(#lg30)"/><rect x="1413" y="136" width="20.2" height="7.500" fill="url(#lg31)"/></g>
<g clip-path="url(#cp32)"><rect x="1445" y="136" width="22" height="28.2" fill="url(#lg33)"/><rect x="1445" y="136" width="22" height="7.500" fill="url(#lg34)"/></g>
<g clip-path="url(#cp35)"><rect x="1421" y="166" width="22" height="24" fill="url(#lg36)"/><rect x="1421" y="166" width="22" height="7.500" fill="url(#lg37)"/></g>
<g clip-path="url(#cp38)"><rect x="1520" y="150" width="14" height="32" fill="#f042b4"/><path d="M1520 170.4Q1527.0 160.4 1534 158.4V182H1520Z" fill="url(#lg39)"/></g>
<g clip-path="url(#cp40)"><rect x="1536" y="133.7" width="14" height="42.2" fill="#e144cc"/><path d="M1536 159.01999999999998Q1543.0 154.01999999999998 1550 162.01999999999998V175.89999999999998H1536Z" fill="url(#lg41)"/></g>
<g clip-path="url(#cp42)"><rect x="1552" y="156" width="14" height="37.7" fill="#b844f4"/><path d="M1552 163.195Q1559.0 175.195 1566 165.195V193.7H1552Z" fill="url(#lg43)"/></g>
<g clip-path="url(#cp44)"><rect x="1568" y="146" width="14" height="35.7" fill="#9450f6"/><path d="M1568 162.13400000000001Q1575.0 174.13400000000001 1582 164.13400000000001V181.7H1568Z" fill="url(#lg45)"/></g>
<rect x="2239.400" y="151.200" width="29.500" height="25.500" fill="none" stroke="#3aa0f0" stroke-width="2"/><rect x="2243" y="154.500" width="4" height="19" fill="#3aa0f0"/><rect x="2298.500" y="150" width="1.200" height="28" fill="#4a4a4a"/><rect x="2329" y="151.200" width="29.500" height="25.500" fill="none" stroke="#3aa0f0" stroke-width="2"/><rect x="2351" y="154.500" width="4" height="19" fill="#3aa0f0"/>
<circle cx="2499" cy="164" r="32" fill="#7a828c"/><g clip-path="url(#cp46)" fill="#e6e9ee"><ellipse cx="2499" cy="158" rx="11.500" ry="15"/><path d="M2493 168H2505V176Q2507 180.500 2518 184Q2526 187 2528 196H2470Q2472 187 2480 184Q2491 180.500 2493 176Z"/></g>
<path d="M140.25 273.05L148 281.55L155.75 273.05" stroke="#9b9b9b" stroke-width="3" fill="none" stroke-linecap="round" stroke-linejoin="round"/>
<rect x="178" y="260.8" width="32" height="32.400" rx="4.500" fill="#3fce4f"/><path transform="translate(178 260.8)" d="M3 4C4.500 2.800 8 3.200 11.200 4.900C14 6 16.800 9 18.200 11C19.500 13 19.800 15.500 21 17.400C22.500 19.300 25 20.500 26.500 21.800L27.900 23.700L24.300 24.600L29 29C27 28.900 25 28.600 23.700 28.200C22 27.900 20.500 27.600 19.600 27.100C18 26.500 16.500 25.600 15.400 24.600C14.200 23.500 12.500 21.500 11.500 20.100L10.400 19L9.600 21.800L8.200 22.100C7.600 21.300 7.200 20.400 7.100 19.600C6.700 18.500 6.600 17.800 6.700 16.800C6.800 15.500 7.200 14.300 7.600 13.500C7.200 12.800 6.800 12.300 6.500 11.800L4.900 8.500L3.200 5.700Z" fill="#fff"/><path d="M186.2 268.2Q187.4 268.0 187.6 269.40000000000003" stroke="#3fce4f" stroke-width="1" fill="none"/>
<g clip-path="url(#cp47)"><rect x="215.8" y="304.8" width="28.4" height="32.2" fill="#4f5a65"/><path d="M215.8 304.8H244.20000000000002V324.83333333333337A14.2 4.3 0 0 1 215.8 324.83333333333337Z" fill="#69747f"/><path d="M215.8 304.8H244.20000000000002V316.9666666666667A14.2 4.3 0 0 1 215.8 316.9666666666667Z" fill="#8a929b"/><ellipse cx="230.0" cy="309.1" rx="14.2" ry="4.3" fill="#b3bac2"/></g>
<g clip-path="url(#cp48)"><rect x="215.8" y="348.8" width="28.4" height="32.2" fill="#4f5a65"/><path d="M215.8 348.8H244.20000000000002V368.83333333333337A14.2 4.3 0 0 1 215.8 368.83333333333337Z" fill="#69747f"/><path d="M215.8 348.8H244.20000000000002V360.9666666666667A14.2 4.3 0 0 1 215.8 360.9666666666667Z" fill="#8a929b"/><ellipse cx="230.0" cy="353.1" rx="14.2" ry="4.3" fill="#b3bac2"/></g>
<g clip-path="url(#cp49)"><rect x="215.8" y="392.8" width="28.4" height="32.2" fill="#4f5a65"/><path d="M215.8 392.8H244.20000000000002V412.83333333333337A14.2 4.3 0 0 1 215.8 412.83333333333337Z" fill="#69747f"/><path d="M215.8 392.8H244.20000000000002V404.9666666666667A14.2 4.3 0 0 1 215.8 404.9666666666667Z" fill="#8a929b"/><ellipse cx="230.0" cy="397.1" rx="14.2" ry="4.3" fill="#b3bac2"/></g>
<g clip-path="url(#cp50)"><rect x="215.8" y="436.8" width="28.4" height="32.2" fill="#4f5a65"/><path d="M215.8 436.8H244.20000000000002V456.83333333333337A14.2 4.3 0 0 1 215.8 456.83333333333337Z" fill="#69747f"/><path d="M215.8 436.8H244.20000000000002V448.9666666666667A14.2 4.3 0 0 1 215.8 448.9666666666667Z" fill="#8a929b"/><ellipse cx="230.0" cy="441.1" rx="14.2" ry="4.3" fill="#b3bac2"/></g>
<g clip-path="url(#cp51)"><rect x="215.8" y="480.8" width="28.4" height="32.2" fill="#4f5a65"/><path d="M215.8 480.8H244.20000000000002V500.83333333333337A14.2 4.3 0 0 1 215.8 500.83333333333337Z" fill="#69747f"/><path d="M215.8 480.8H244.20000000000002V492.9666666666667A14.2 4.3 0 0 1 215.8 492.9666666666667Z" fill="#8a929b"/><ellipse cx="230.0" cy="485.1" rx="14.2" ry="4.3" fill="#b3bac2"/></g>
<g clip-path="url(#cp52)"><rect x="215.8" y="524.8" width="28.4" height="32.2" fill="#4f5a65"/><path d="M215.8 524.8H244.20000000000002V544.8333333333333A14.2 4.3 0 0 1 215.8 544.8333333333333Z" fill="#69747f"/><path d="M215.8 524.8H244.20000000000002V536.9666666666666A14.2 4.3 0 0 1 215.8 536.9666666666666Z" fill="#8a929b"/><ellipse cx="230.0" cy="529.0999999999999" rx="14.2" ry="4.3" fill="#b3bac2"/></g>
<g clip-path="url(#cp53)"><rect x="215.8" y="568.8" width="28.4" height="32.2" fill="#4f5a65"/><path d="M215.8 568.8H244.20000000000002V588.8333333333333A14.2 4.3 0 0 1 215.8 588.8333333333333Z" fill="#69747f"/><path d="M215.8 568.8H244.20000000000002V580.9666666666666A14.2 4.3 0 0 1 215.8 580.9666666666666Z" fill="#8a929b"/><ellipse cx="230.0" cy="573.0999999999999" rx="14.2" ry="4.3" fill="#b3bac2"/></g>
<g clip-path="url(#cp54)"><rect x="215.8" y="612.8" width="28.4" height="32.2" fill="#4f5a65"/><path d="M215.8 612.8H244.20000000000002V632.8333333333333A14.2 4.3 0 0 1 215.8 632.8333333333333Z" fill="#69747f"/><path d="M215.8 612.8H244.20000000000002V624.9666666666666A14.2 4.3 0 0 1 215.8 624.9666666666666Z" fill="#8a929b"/><ellipse cx="230.0" cy="617.0999999999999" rx="14.2" ry="4.3" fill="#b3bac2"/></g>
<g clip-path="url(#cp55)"><rect x="215.8" y="656.8" width="28.4" height="32.2" fill="#4f5a65"/><path d="M215.8 656.8H244.20000000000002V676.8333333333333A14.2 4.3 0 0 1 215.8 676.8333333333333Z" fill="#69747f"/><path d="M215.8 656.8H244.20000000000002V668.9666666666666A14.2 4.3 0 0 1 215.8 668.9666666666666Z" fill="#8a929b"/><ellipse cx="230.0" cy="661.0999999999999" rx="14.2" ry="4.3" fill="#b3bac2"/></g>
<g clip-path="url(#cp56)"><rect x="215.8" y="700.8" width="28.4" height="32.2" fill="#4f5a65"/><path d="M215.8 700.8H244.20000000000002V720.8333333333333A14.2 4.3 0 0 1 215.8 720.8333333333333Z" fill="#69747f"/><path d="M215.8 700.8H244.20000000000002V712.9666666666666A14.2 4.3 0 0 1 215.8 712.9666666666666Z" fill="#8a929b"/><ellipse cx="230.0" cy="705.0999999999999" rx="14.2" ry="4.3" fill="#b3bac2"/></g>
<g clip-path="url(#cp57)"><rect x="215.8" y="744.8" width="28.4" height="32.2" fill="#4f5a65"/><path d="M215.8 744.8H244.20000000000002V764.8333333333333A14.2 4.3 0 0 1 215.8 764.8333333333333Z" fill="#69747f"/><path d="M215.8 744.8H244.20000000000002V756.9666666666666A14.2 4.3 0 0 1 215.8 756.9666666666666Z" fill="#8a929b"/><ellipse cx="230.0" cy="749.0999999999999" rx="14.2" ry="4.3" fill="#b3bac2"/></g>
<g clip-path="url(#cp58)"><rect x="215.8" y="788.8" width="28.4" height="32.2" fill="#4f5a65"/><path d="M215.8 788.8H244.20000000000002V808.8333333333333A14.2 4.3 0 0 1 215.8 808.8333333333333Z" fill="#69747f"/><path d="M215.8 788.8H244.20000000000002V800.9666666666666A14.2 4.3 0 0 1 215.8 800.9666666666666Z" fill="#8a929b"/><ellipse cx="230.0" cy="793.0999999999999" rx="14.2" ry="4.3" fill="#b3bac2"/></g>
<path d="M175.95 845.05L183.7 853.55L191.45 845.05" stroke="#a9a9a9" stroke-width="3" fill="none" stroke-linecap="round" stroke-linejoin="round"/>
<g clip-path="url(#cp59)"><rect x="215.8" y="832.8" width="28.4" height="32.2" fill="#0d6f33"/><path d="M215.8 832.8H244.20000000000002V852.8333333333333A14.2 4.3 0 0 1 215.8 852.8333333333333Z" fill="#179a48"/><path d="M215.8 832.8H244.20000000000002V844.9666666666666A14.2 4.3 0 0 1 215.8 844.9666666666666Z" fill="#27c25f"/><ellipse cx="230.0" cy="837.0999999999999" rx="14.2" ry="4.3" fill="#6fe0a0"/></g>
<path d="M217.75 883.75L226.25 891.5L217.75 899.25" stroke="#9b9b9b" stroke-width="3" fill="none" stroke-linecap="round" stroke-linejoin="round"/>
<path d="M217.75 927.75L226.25 935.5L217.75 943.25" stroke="#9b9b9b" stroke-width="3" fill="none" stroke-linecap="round" stroke-linejoin="round"/>
<path d="M217.75 971.75L226.25 979.5L217.75 987.25" stroke="#9b9b9b" stroke-width="3" fill="none" stroke-linecap="round" stroke-linejoin="round"/>
<path d="M217.75 1015.75L226.25 1023.5L217.75 1031.25" stroke="#9b9b9b" stroke-width="3" fill="none" stroke-linecap="round" stroke-linejoin="round"/>
<path d="M217.75 1059.75L226.25 1067.5L217.75 1075.25" stroke="#9b9b9b" stroke-width="3" fill="none" stroke-linecap="round" stroke-linejoin="round"/>
<path d="M217.75 1103.75L226.25 1111.5L217.75 1119.25" stroke="#9b9b9b" stroke-width="3" fill="none" stroke-linecap="round" stroke-linejoin="round"/>
<g clip-path="url(#cp60)"><rect x="250" y="877" width="32" height="8.18" fill="url(#lg61)"/><rect x="250.00" y="884.68" width="10.42" height="8.61" fill="#e2f1fe"/><rect x="250.00" y="892.79" width="10.42" height="8.61" fill="#b5dafb"/><rect x="250.00" y="900.89" width="10.42" height="8.61" fill="#83c2f8"/><rect x="259.92" y="884.68" width="12.66" height="8.61" fill="#b5dafb"/><rect x="259.92" y="892.79" width="12.66" height="8.61" fill="#83c2f8"/><rect x="259.92" y="900.89" width="12.66" height="8.61" fill="#57aaf4"/><rect x="272.08" y="884.68" width="10.42" height="8.61" fill="#83c2f8"/><rect x="272.08" y="892.79" width="10.42" height="8.61" fill="#57aaf4"/><rect x="272.08" y="900.89" width="10.42" height="8.61" fill="#3597f0"/></g>
<g clip-path="url(#cp62)"><rect x="250" y="921" width="30" height="7.70" fill="url(#lg63)"/><rect x="250.00" y="928.20" width="9.80" height="8.10" fill="#e2f1fe"/><rect x="250.00" y="935.80" width="9.80" height="8.10" fill="#b5dafb"/><rect x="250.00" y="943.40" width="9.80" height="8.10" fill="#83c2f8"/><rect x="259.30" y="928.20" width="11.90" height="8.10" fill="#b5dafb"/><rect x="259.30" y="935.80" width="11.90" height="8.10" fill="#83c2f8"/><rect x="259.30" y="943.40" width="11.90" height="8.10" fill="#57aaf4"/><rect x="270.70" y="928.20" width="9.80" height="8.10" fill="#83c2f8"/><rect x="270.70" y="935.80" width="9.80" height="8.10" fill="#57aaf4"/><rect x="270.70" y="943.40" width="9.80" height="8.10" fill="#3597f0"/></g>
<path d="M262 947H276" stroke="#0660b8" stroke-width="3"/><circle cx="262" cy="947" r="4.3" fill="#fff" stroke="#0a66c2" stroke-width="3.400"/><circle cx="276" cy="947" r="4.300" fill="#fff" stroke="#0a66c2" stroke-width="3.400"/>
<g fill="none" stroke-linecap="round" stroke-linejoin="round" transform="translate(250 965)"><path d="M1.500 29.800C9 31.500 11 26 12.500 17L14 9.500C15 2.500 18.500 1.200 23 2.200" stroke="#1b93f2" stroke-width="3.600"/><path d="M4.500 12.800H23" stroke="#1b93f2" stroke-width="3.600"/><path d="M21.500 20L30.500 29M30.500 20L21.500 29" stroke="#0a78de" stroke-width="3.600"/></g>
<circle cx="266" cy="1025.3" r="16" fill="url(#lg64)"/><circle cx="266" cy="1025.3" r="12" fill="#f4f6f4"/><path d="M266 1017V1025.3H259.500" stroke="#222" stroke-width="1.600" fill="none"/><path d="M266 1025.3L272.500 1032.5" stroke="#e8502e" stroke-width="1.400"/><circle cx="266" cy="1025.3" r="1.800" fill="#222"/>
<g clip-path="url(#cp65)"><rect x="262" y="1053" width="20" height="6.50" fill="url(#lg66)"/><rect x="262.00" y="1059.00" width="6.70" height="5.17" fill="#fb9a84"/><rect x="262.00" y="1063.67" width="6.70" height="5.17" fill="#fb9a84"/><rect x="262.00" y="1068.33" width="6.70" height="5.17" fill="#fb9a84"/><rect x="268.20" y="1059.00" width="8.10" height="5.17" fill="#fb8a72"/><rect x="268.20" y="1063.67" width="8.10" height="5.17" fill="#fb8a72"/><rect x="268.20" y="1068.33" width="8.10" height="5.17" fill="#fb8a72"/><rect x="275.80" y="1059.00" width="6.70" height="5.17" fill="#fa7c62"/><rect x="275.80" y="1063.67" width="6.70" height="5.17" fill="#fa7c62"/><rect x="275.80" y="1068.33" width="6.70" height="5.17" fill="#fa7c62"/></g>
<g clip-path="url(#cp67)"><rect x="250" y="1065" width="20" height="6.50" fill="url(#lg68)"/><rect x="250.00" y="1071.00" width="6.70" height="5.17" fill="#e2f1fe"/><rect x="250.00" y="1075.67" width="6.70" height="5.17" fill="#b5dafb"/><rect x="250.00" y="1080.33" width="6.70" height="5.17" fill="#83c2f8"/><rect x="256.20" y="1071.00" width="8.10" height="5.17" fill="#b5dafb"/><rect x="256.20" y="1075.67" width="8.10" height="5.17" fill="#83c2f8"/><rect x="256.20" y="1080.33" width="8.10" height="5.17" fill="#57aaf4"/><rect x="263.80" y="1071.00" width="6.70" height="5.17" fill="#83c2f8"/><rect x="263.80" y="1075.67" width="6.70" height="5.17" fill="#57aaf4"/><rect x="263.80" y="1080.33" width="6.70" height="5.17" fill="#3597f0"/></g>
<rect x="252" y="1097.5" width="26" height="32" rx="4" fill="#4a5058"/><rect x="252" y="1097.5" width="26" height="27.500" rx="4" fill="url(#lg26)"/><path d="M259.800 1111.5A5.400 5.400 0 1 1 262.500 1116.4" fill="none" stroke="#fff" stroke-width="2.200"/><path d="M256 1110.5H263.800L259.900 1115.3Z" fill="#fff"/>
<g fill="none" stroke="#f2f2f2" stroke-width="2.400" stroke-linecap="round"><path d="M138.200 1432.700V1437M138.200 1459.500V1463.500"/><path d="M132 1445.700V1443A6.200 6.200 0 0 1 144.400 1443V1445.700Z" stroke-linejoin="round"/><path d="M132 1450.700V1453.300A6.200 6.200 0 0 0 144.400 1453.300V1450.700Z" stroke-linejoin="round"/><path d="M135.800 1450.700V1448M140.600 1450.700V1448" stroke-width="2"/></g>
<circle cx="189.500" cy="1445.500" r="9" fill="none" stroke="#ececec" stroke-width="2.600"/><path d="M196 1452.500L203.500 1460" stroke="#ececec" stroke-width="3" stroke-linecap="round"/>
<path d="M627.0 325.5A11.0 4.2 0 0 1 649.0 325.5A11.0 4.2 0 0 1 627.0 325.5V342.70000000000005A11.0 4.2 0 0 0 649.0 342.70000000000005V325.5M627.0 331.23333333333335A11.0 4.2 0 0 0 649.0 331.23333333333335M627.0 336.9666666666667A11.0 4.2 0 0 0 649.0 336.9666666666667" fill="none" stroke="#7e7e7e" stroke-width="2"/>
<path d="M643 334.500H658V353H643Z" fill="#1b1b1b"/><path d="M645.300 337.500L654.800 344L645.300 350.500Z" fill="none" stroke="#0a84ff" stroke-width="2.200" stroke-linejoin="round"/>
<path d="M697.0 325.5A11.0 4.2 0 0 1 719.0 325.5A11.0 4.2 0 0 1 697.0 325.5V342.70000000000005A11.0 4.2 0 0 0 719.0 342.70000000000005V325.5M697.0 331.23333333333335A11.0 4.2 0 0 0 719.0 331.23333333333335M697.0 336.9666666666667A11.0 4.2 0 0 0 719.0 336.9666666666667" fill="none" stroke="#4b4b4b" stroke-width="2"/>
<path d="M706 336H726V352H706Z" fill="#1b1b1b"/><path d="M708.500 344.500L713.500 349.500L723.500 338.500" fill="none" stroke="#175a99" stroke-width="2.400"/>
<path d="M768.0 325.5A11.0 4.2 0 0 1 790.0 325.5A11.0 4.2 0 0 1 768.0 325.5V342.70000000000005A11.0 4.2 0 0 0 790.0 342.70000000000005V325.5M768.0 331.23333333333335A11.0 4.2 0 0 0 790.0 331.23333333333335M768.0 336.9666666666667A11.0 4.2 0 0 0 790.0 336.9666666666667" fill="none" stroke="#4b4b4b" stroke-width="2"/>
<path d="M773 334H797V353H773Z" fill="#1b1b1b"/><path d="M779.500 343.500A7.300 7.300 0 1 1 785.500 350.800" fill="none" stroke="#175a99" stroke-width="2.200"/><path d="M775 341.500L779.800 346.500L784.800 341.500" fill="none" stroke="#175a99" stroke-width="2.200"/>
<path d="M829 314.300V354M1135 314.300V354" stroke="#4c4c4c" stroke-width="2"/>
<path d="M863.500 321.300H873.500L883 330.500V346.500A4.500 4.500 0 0 1 878.500 351H863.500A4.500 4.500 0 0 1 859 346.500V325.800A4.500 4.500 0 0 1 863.500 321.300Z" fill="none" stroke="#8b8b8b" stroke-width="2"/><path d="M873.500 321.500V327A3.500 3.500 0 0 0 877 330.500H883" fill="none" stroke="#8b8b8b" stroke-width="2"/><path d="M864 333H872M864 337H878M864 341H874M864 345H878" stroke="#0a84ff" stroke-width="2"/><path d="M889.300 342.300H899L894.200 348Z" fill="#0a84ff"/>
<path d="M936 323H958A2 2 0 0 1 960 325V327.500L949.500 340V345.500L944.500 349.500V340L934 327.500V325A2 2 0 0 1 936 323Z" fill="none" stroke="#8b8b8b" stroke-width="2" stroke-linejoin="round"/><path d="M936 327H954.800" stroke="#0a84ff" stroke-width="2"/>
<path d="M1008.500 320.500V350.500M1002 343.500L1008.500 350.500L1015 343.500" fill="none" stroke="#0a84ff" stroke-width="2.200" stroke-linecap="round" stroke-linejoin="round"/><path d="M1016 323H1033M1016 331H1033M1020 339H1033M1020 347H1033" stroke="#8b8b8b" stroke-width="2"/>
<rect x="1072" y="321" width="30" height="30" rx="4" fill="none" stroke="#8b8b8b" stroke-width="2"/><path d="M1072 331H1102M1072 341H1102" stroke="#8b8b8b" stroke-width="2"/><path d="M1082 321V351M1092 321V351M1082 321H1092M1082 331H1092M1082 341H1092M1082 351H1092" stroke="#0a84ff" stroke-width="2.200" stroke-linecap="square"/>
<path d="M1176 349H1174.500A5.500 5.500 0 0 1 1169 343.500V328.500A5.500 5.500 0 0 1 1174.500 323H1185.200A5.500 5.500 0 0 1 1190.700 328.500V330.500" fill="none" stroke="#8b8b8b" stroke-width="2"/><path d="M1195 349.500C1195 343 1191 340 1186 340H1180M1185.500 334.500L1179.500 340L1185.500 345.800" fill="none" stroke="#3cc42c" stroke-width="2.400" stroke-linecap="round" stroke-linejoin="round"/>
<path d="M1245 349H1243.500A5.500 5.500 0 0 1 1238 343.500V328.500A5.500 5.500 0 0 1 1243.500 323H1254.300A5.500 5.500 0 0 1 1259.800 328.500V331" fill="none" stroke="#8b8b8b" stroke-width="2"/><path d="M1249 336C1249 341.500 1252.500 344.500 1257 344.500H1264.500M1259 338.500L1265 344.500L1259 350.500" fill="none" stroke="#ff9326" stroke-width="2.400" stroke-linecap="round" stroke-linejoin="round"/>
<path d="M1308.0 325.5A11.0 4.2 0 0 1 1330.0 325.5A11.0 4.2 0 0 1 1308.0 325.5V343.70000000000005A11.0 4.2 0 0 0 1330.0 343.70000000000005V325.5M1308.0 331.56666666666666A11.0 4.2 0 0 0 1330.0 331.56666666666666M1308.0 337.6333333333334A11.0 4.2 0 0 0 1330.0 337.6333333333334" fill="none" stroke="#7e7e7e" stroke-width="2"/>
<rect x="1317.500" y="330" width="21.500" height="22" rx="3" fill="#0a84ff"/><text x="1328.300" y="340" font-size="9.500" font-weight="700" fill="#fff" text-anchor="middle" letter-spacing="0.3">101</text><text x="1328.300" y="349.800" font-size="9" font-weight="700" fill="#fff" text-anchor="middle" letter-spacing="0.8">ABC</text>
<rect x="1379" y="329.4" width="4" height="15.3" rx="2" fill="none" stroke="#0a84ff" stroke-width="2"/>
<rect x="1387" y="321.3" width="4" height="19.4" rx="2" fill="none" stroke="#0a84ff" stroke-width="2"/>
<rect x="1395" y="333.3" width="4" height="17.7" rx="2" fill="none" stroke="#0a84ff" stroke-width="2"/>
<rect x="1403" y="327.4" width="4" height="17.3" rx="2" fill="none" stroke="#0a84ff" stroke-width="2"/>
<path d="M630 1452.200H650M640 1442.200V1462.200M674 1452.200H694" stroke="#c9c9c9" stroke-width="4"/><path d="M741 1452.500L748.500 1460L762.500 1444.500" fill="none" stroke="#5b5b5b" stroke-width="4.400"/><path d="M789.500 1443.800L806.500 1460.800M806.500 1443.800L789.500 1460.800" stroke="#5b5b5b" stroke-width="4.400"/><path d="M870.500 1446A8.300 8.300 0 1 0 872.800 1455" fill="none" stroke="#c9c9c9" stroke-width="4.200"/><path d="M864.500 1450.500H876V1439.500Z" fill="#c9c9c9"/><rect x="900" y="1442.200" width="20" height="20" rx="2.500" fill="#5c5c5c"/>
<rect x="1617.400" y="1445.500" width="3.600" height="17" fill="#bdbdbd"/><path d="M1621.8 1454L1632 1445.500V1452.200H1642.3V1455.800H1632V1462.500Z" fill="#bdbdbd"/><path d="M1659.7 1454L1670 1445.500V1452.200H1680V1455.800H1670V1462.500Z" fill="#bdbdbd"/><path d="M1801.7 1454L1791.5 1445.500V1452.200H1781.7V1455.800H1791.5V1462.500Z" fill="#bdbdbd"/><path d="M1840 1454L1829.8 1445.500V1452.200H1819.6V1455.800H1829.8V1462.500Z" fill="#bdbdbd"/><rect x="1840.900" y="1445.500" width="3.600" height="17" fill="#bdbdbd"/>
<g transform="translate(1890 1456)" fill="#bdbdbd"><rect x="-2.600" y="-11.300" width="5.200" height="5" rx="1" transform="rotate(0)"/><rect x="-2.600" y="-11.300" width="5.200" height="5" rx="1" transform="rotate(45)"/><rect x="-2.600" y="-11.300" width="5.200" height="5" rx="1" transform="rotate(90)"/><rect x="-2.600" y="-11.300" width="5.200" height="5" rx="1" transform="rotate(135)"/><rect x="-2.600" y="-11.300" width="5.200" height="5" rx="1" transform="rotate(180)"/><rect x="-2.600" y="-11.300" width="5.200" height="5" rx="1" transform="rotate(225)"/><rect x="-2.600" y="-11.300" width="5.200" height="5" rx="1" transform="rotate(270)"/><rect x="-2.600" y="-11.300" width="5.200" height="5" rx="1" transform="rotate(315)"/></g><circle cx="1890" cy="1456" r="6.200" fill="none" stroke="#bdbdbd" stroke-width="4"/>
<rect x="1949.300" y="1443.600" width="25.400" height="24.800" fill="none" stroke="#0a84ff" stroke-width="2.600"/><path d="M1949 1445.500H1975" stroke="#0a84ff" stroke-width="4"/><path d="M1957.800 1443V1469M1966.200 1443V1469M1949 1452.800H1975M1949 1460.600H1975" stroke="#0a84ff" stroke-width="2.200"/>
<rect x="2005.200" y="1443.600" width="25.400" height="24.800" fill="none" stroke="#bdbdbd" stroke-width="2.600"/><path d="M2005 1445.500H2031" stroke="#bdbdbd" stroke-width="4"/><path d="M2009.200 1450.800V1455.600M2009.200 1459V1463.800" stroke="#bdbdbd" stroke-width="2.200"/><rect x="2013" y="1451.200" width="13.500" height="4" fill="none" stroke="#bdbdbd" stroke-width="2"/><rect x="2013" y="1459.400" width="13.500" height="4" fill="none" stroke="#bdbdbd" stroke-width="2"/>
<circle cx="2286.800" cy="266" r="14.500" fill="none" stroke="#0a7aff" stroke-width="3.400"/><circle cx="2286.800" cy="259.300" r="2.100" fill="#0a7aff"/><rect x="2285" y="263.500" width="3.600" height="10.500" fill="#0a7aff"/>
<rect x="2321.800" y="252.800" width="26.500" height="26.500" fill="none" stroke="#4b4b4b" stroke-width="1.600"/><text x="2335.200" y="269.300" font-size="8.600" font-weight="700" fill="#555" text-anchor="middle" letter-spacing="0.2">DDL</text>
<g clip-path="url(#cp69)"><rect x="2116" y="360" width="104.3" height="28.58" fill="url(#lg70)"/><rect x="2116.00" y="388.08" width="32.83" height="24.57" fill="#e2f1fe"/><rect x="2116.00" y="412.16" width="32.83" height="24.57" fill="#c6e3fc"/><rect x="2116.00" y="436.23" width="32.83" height="24.57" fill="#a3d3fb"/><rect x="2148.33" y="388.08" width="40.13" height="24.57" fill="#c6e3fc"/><rect x="2148.33" y="412.16" width="40.13" height="24.57" fill="#a3d3fb"/><rect x="2148.33" y="436.23" width="40.13" height="24.57" fill="#8bc8fa"/><rect x="2187.97" y="388.08" width="32.83" height="24.57" fill="#a3d3fb"/><rect x="2187.97" y="412.16" width="32.83" height="24.57" fill="#8bc8fa"/><rect x="2187.97" y="436.23" width="32.83" height="24.57" fill="#72bcf9"/></g>
<path transform="translate(2110.900 514) scale(1.19 1.14)" d="M3 4C4.500 2.800 8 3.200 11.200 4.900C14 6 16.800 9 18.200 11C19.500 13 19.800 15.500 21 17.400C22.500 19.300 25 20.500 26.500 21.800L27.900 23.700L24.300 24.600L29 29C27 28.900 25 28.600 23.700 28.200C22 27.900 20.500 27.600 19.600 27.100C18 26.500 16.500 25.600 15.400 24.600C14.200 23.500 12.500 21.500 11.500 20.100L10.400 19L9.600 21.800L8.200 22.100C7.600 21.300 7.200 20.400 7.100 19.600C6.700 18.500 6.600 17.800 6.700 16.800C6.800 15.500 7.200 14.300 7.600 13.500C7.200 12.800 6.800 12.300 6.500 11.800L4.900 8.500L3.200 5.700Z" fill="none" stroke="#747474" stroke-width="1.700" stroke-linejoin="round"/><path d="M2122.200 524.500Q2124.200 525 2124.800 527" stroke="#747474" stroke-width="1.600" fill="none"/>
<path d="M2117.8 567.0A12.200000000000045 4.2 0 0 1 2142.2000000000003 567.0A12.200000000000045 4.2 0 0 1 2117.8 567.0V584.8999999999999A12.200000000000045 4.2 0 0 0 2142.2000000000003 584.8999999999999V567.0M2117.8 572.9666666666666A12.200000000000045 4.2 0 0 0 2142.2000000000003 572.9666666666666M2117.8 578.9333333333333A12.200000000000045 4.2 0 0 0 2142.2000000000003 578.9333333333333" fill="none" stroke="#777" stroke-width="2"/>
</svg>
</div><div id="hl"></div></div>
</body></html>
